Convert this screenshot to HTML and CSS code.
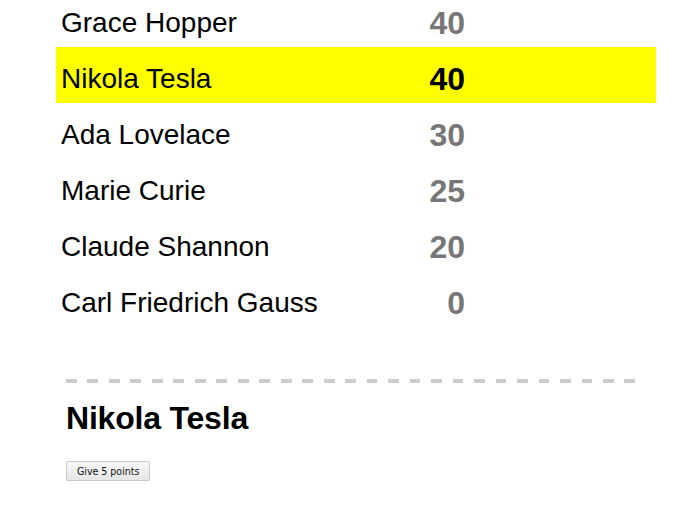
FILE: index.html
```html
<!DOCTYPE html>
<html>
<head>
<meta charset="utf-8">
<link rel="stylesheet" href="styles.css">
</head>
<body>
<div class="outer">
  <div class="leaderboard">
    <div class="player"><span class="name">Grace Hopper</span><span class="score">40</span></div>
    <div class="player selected"><span class="name">Nikola Tesla</span><span class="score">40</span></div>
    <div class="player"><span class="name">Ada Lovelace</span><span class="score">30</span></div>
    <div class="player"><span class="name">Marie Curie</span><span class="score">25</span></div>
    <div class="player"><span class="name">Claude Shannon</span><span class="score">20</span></div>
    <div class="player"><span class="name">Carl Friedrich Gauss</span><span class="score">0</span></div>
  </div>
  <div class="details">
    <div class="details-name">Nikola Tesla</div>
    <button class="inc" type="button">Give 5 points</button>
  </div>
</div>
</body>
</html>
```
FILE: styles.css
```css
html, body {
  margin: 0;
  padding: 0;
  background: #fff;
}
body {
  font-family: "Liberation Sans", Arial, sans-serif;
  color: #000;
}
.outer {
  width: 600px;
  margin: -9px 0 0 56px;
}
.player {
  display: flex;
  align-items: center;
  height: 56px;
  padding: 8px 5px 0;
  box-sizing: border-box;
}
.player .name {
  width: 304px;
  font-size: 28px;
}
.player .score {
  width: 100px;
  text-align: right;
  font-size: 32px;
  font-weight: bold;
  color: #777;
}
.player.selected {
  background: #ffff00;
}
.player.selected .score {
  color: #000;
}
.details {
  margin: 52px 10px 0;
  padding: 21px 0 10px;
  background-image: repeating-linear-gradient(to right, #cccccc 0, #cccccc 10.74px, transparent 10.74px, transparent 21.48px);
  background-size: 100% 4px;
  background-repeat: no-repeat;
  background-position: 0 0;
}
.details-name {
  font-size: 32px;
  font-weight: bold;
  line-height: 37px;
  letter-spacing: -0.2px;
}
.inc {
  margin-top: 24px;
  font-family: "DejaVu Sans Condensed", "DejaVu Sans", sans-serif;
  font-size: 10.5px;
  height: 20px;
  padding: 0 10px;
  border: 1px solid #c8c8c8;
  border-radius: 2px;
  background: linear-gradient(#f8f8f8, #e6e6e6);
  color: #111;
}
```
